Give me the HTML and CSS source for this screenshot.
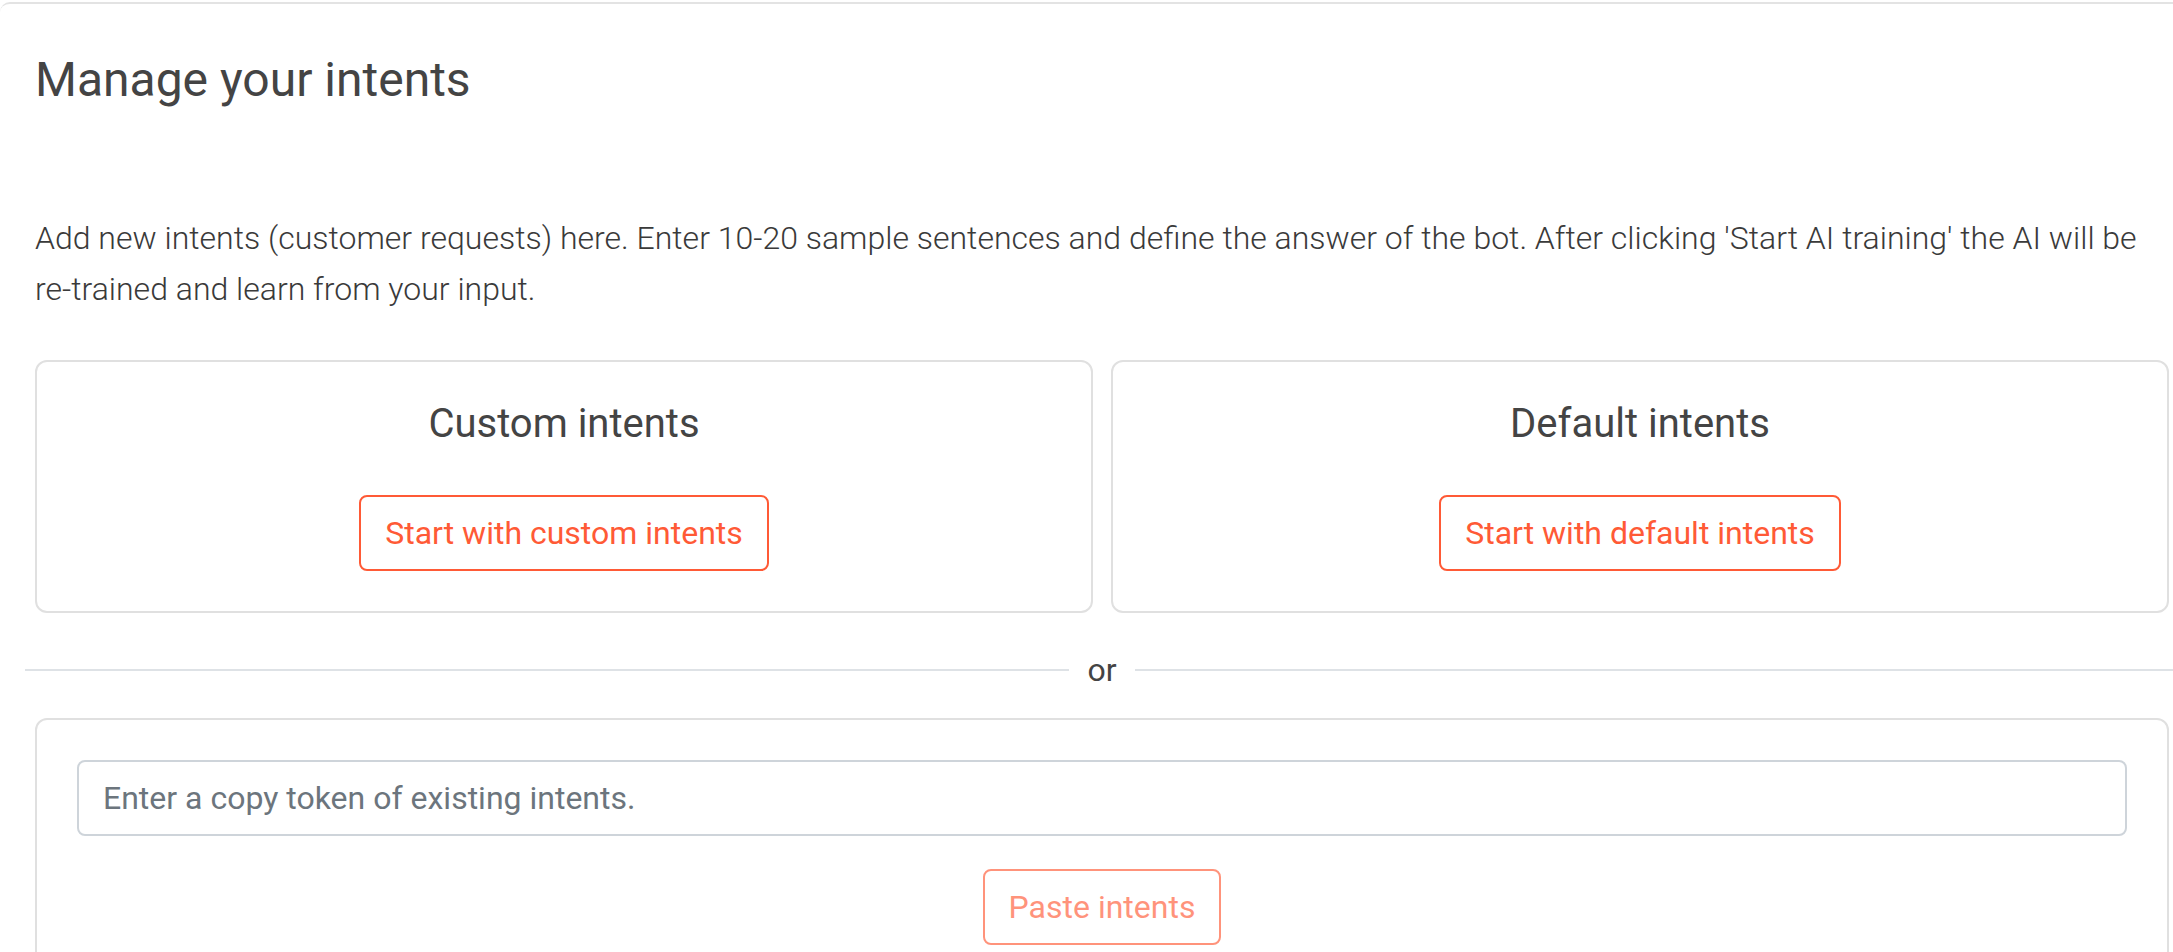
FILE: index.html
```html
<!DOCTYPE html>
<html lang="en">
<head>
<meta charset="utf-8">
<title>Manage your intents</title>
<link rel="stylesheet" href="styles.css">
</head>
<body>
<div class="frame">
  <div class="page">
    <h1 class="title">Manage your intents</h1>
    <p class="lead">Add new intents (customer requests) here. Enter 10-20 sample sentences and define the answer of the bot. After clicking 'Start AI training' the AI will be re-trained and learn from your input.</p>
    <div class="deck">
      <div class="card">
        <div class="card-body centered">
          <h4 class="card-title">Custom intents</h4>
          <button class="btn">Start with custom intents</button>
        </div>
      </div>
      <div class="card">
        <div class="card-body centered">
          <h4 class="card-title">Default intents</h4>
          <button class="btn">Start with default intents</button>
        </div>
      </div>
    </div>
    <div class="divider"><span class="divider-line"></span><span class="divider-text">or</span><span class="divider-line"></span></div>
    <div class="card">
      <div class="card-body card-body-form">
        <input class="input" type="text" placeholder="Enter a copy token of existing intents.">
        <div class="centered paste-row">
          <button class="btn btn-disabled" disabled>Paste intents</button>
        </div>
      </div>
    </div>
  </div>
</div>
</body>
</html>
```

FILE: styles.css
```css
html, body {
  margin: 0;
  padding: 0;
  background: #ffffff;
  overflow: hidden;
}

body {
  font-family: Roboto, "Liberation Sans", Arial, sans-serif;
  color: #444444;
  font-size: 32px;
  line-height: 1.5;
}

.frame {
  margin-top: 2px;
  border-top: 2px solid #e3e3e3;
  border-top-left-radius: 10px;
  min-height: 950px;
}

.page {
  padding: 0 4px 0 35px;
}

.title {
  margin: 47px 0 0 0;
  font-size: 48px;
  font-weight: 400;
  line-height: 57.6px;
  color: #444444;
}

.lead {
  margin: 104px 0 0 0;
  font-size: 32px;
  font-weight: 300;
  line-height: 51px;
  color: #3a3a3a;
}

.deck {
  margin-top: 45px;
  display: grid;
  grid-template-columns: 1fr 1fr;
  gap: 18px;
}

.card {
  border: 2px solid #e0e0e0;
  border-radius: 12px;
  background: #ffffff;
}

.card-body {
  padding: 38px 40px 40px 40px;
}

.card-body-form {
  padding-top: 40px;
}

.centered {
  display: flex;
  flex-direction: column;
  align-items: center;
}

.card-title {
  margin: 0 0 47px 0;
  font-size: 40px;
  font-weight: 400;
  line-height: 48px;
  color: #444444;
}

.btn {
  font-family: Roboto, "Liberation Sans", Arial, sans-serif;
  font-size: 32px;
  line-height: 48px;
  padding: 12px 24px;
  border: 2px solid #ff5a36;
  border-radius: 8px;
  background: #ffffff;
  color: #ff5a36;
  cursor: pointer;
}

.btn-disabled {
  opacity: 0.65;
  cursor: default;
}

.divider {
  margin: 33px -10px 24px -10px;
  display: flex;
  align-items: center;
  gap: 18px;
  height: 48px;
}

.divider-line {
  flex: 1;
  height: 2px;
  background: #dee2e6;
}

.divider-text {
  font-size: 32px;
  line-height: 48px;
  color: #444444;
}

.input {
  display: block;
  box-sizing: border-box;
  width: 100%;
  height: 76px;
  padding: 12px 24px;
  font-family: Roboto, "Liberation Sans", Arial, sans-serif;
  font-size: 32px;
  line-height: 48px;
  color: #495057;
  border: 2px solid #ced4da;
  border-radius: 8px;
  background: #ffffff;
  outline: none;
}

.input::placeholder {
  color: #6c757d;
  opacity: 1;
}

.paste-row {
  margin-top: 33px;
}
```
